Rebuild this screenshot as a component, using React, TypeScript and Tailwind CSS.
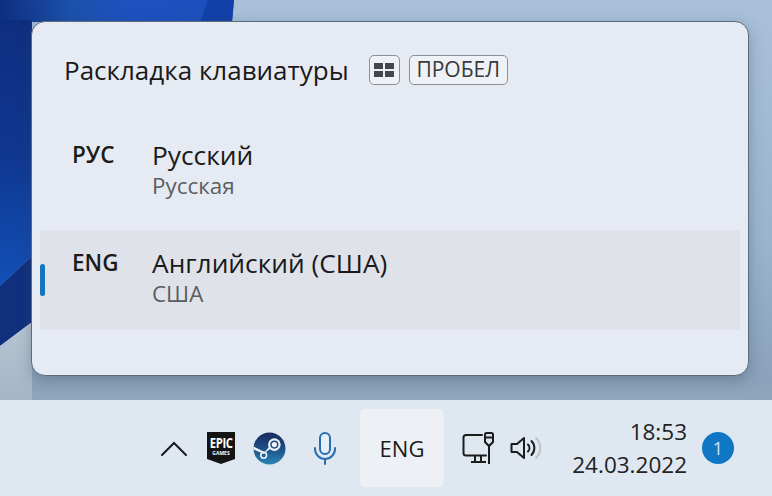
import React from "react";

function Wallpaper() {
  return (
    <svg className="absolute inset-0 h-full w-full" viewBox="0 0 772 400" preserveAspectRatio="none">
      <defs>
        <linearGradient id="sky" x1="0" y1="0" x2="0" y2="1">
          <stop offset="0" stopColor="#a9c0d9" />
          <stop offset="0.6" stopColor="#9ab4ce" />
          <stop offset="0.95" stopColor="#8aa2ba" />
          <stop offset="1" stopColor="#90a6bb" />
        </linearGradient>
        <linearGradient id="top" x1="0" y1="0" x2="1" y2="0">
          <stop offset="0" stopColor="#0e2e80" />
          <stop offset="0.1" stopColor="#123a8e" />
          <stop offset="0.3" stopColor="#1c50aa" />
          <stop offset="0.55" stopColor="#1f51c0" />
          <stop offset="1" stopColor="#1d4fbc" />
        </linearGradient>
        <linearGradient id="side" x1="0" y1="0" x2="0" y2="1">
          <stop offset="0" stopColor="#0e2e80" />
          <stop offset="0.5" stopColor="#0f3790" />
          <stop offset="1" stopColor="#1350b8" />
        </linearGradient>
        <linearGradient id="low" x1="0" y1="0" x2="0" y2="1">
          <stop offset="0" stopColor="#b7c5d3" />
          <stop offset="1" stopColor="#a3b5c6" />
        </linearGradient>
      </defs>
      <rect width="772" height="400" fill="url(#sky)" />
      <path d="M0 0H234L232 22H0Z" fill="url(#top)" />
      <path d="M208 0H234L232 22H200Z" fill="#1240a8" />
      <path d="M0 20H32V256L0 286Z" fill="url(#side)" />
      <path d="M0 286L32 256V322L0 346Z" fill="#10307e" />
      <path d="M0 346L32 322V400H0Z" fill="url(#low)" />
    </svg>
  );
}

function Row({ code, name, sub, active }: { code: string; name: string; sub: string; active?: boolean }) {
  return (
    <div className={`relative flex h-[100px] items-start pl-[32px] pt-[16px] ${active ? "bg-[#dfe3e9]" : ""}`}>
      {active && <div className="absolute left-0 top-[34px] h-[32px] w-[5px] rounded-full bg-[#1674b8]" />}
      <div className="w-[80px] pt-[2px] text-[22.5px] leading-[30px] font-semibold text-[#1b1b1b]">{code}</div>
      <div>
        <div className="text-[26.3px] leading-[34px] text-[#1a1a1a]">{name}</div>
        <div className="text-[22.4px] leading-[28px] text-[#5b5d60]">{sub}</div>
      </div>
    </div>
  );
}

function Epic() {
  return (
    <div className="flex h-[32px] w-[28px] flex-col items-center bg-[#141414] pt-[3px] [clip-path:polygon(0_0,100%_0,100%_84%,50%_100%,0_84%)]">
      <span className="scale-x-75 text-[15px] leading-[15px] font-bold tracking-[-0.5px] text-white">EPIC</span>
      <span className="text-[5px] leading-[7px] font-bold text-white">GAMES</span>
    </div>
  );
}

function Steam() {
  return (
    <svg width="33" height="33" viewBox="0 0 34 34">
      <defs>
        <linearGradient id="st" x1="0" y1="0" x2="0" y2="1">
          <stop offset="0" stopColor="#182a5c" />
          <stop offset="0.5" stopColor="#1d4f86" />
          <stop offset="1" stopColor="#2a86b5" />
        </linearGradient>
      </defs>
      <circle cx="17" cy="17" r="16.500" fill="url(#st)" />
      <path d="M0.500 18L11 22.500l8-6 3-1-3-3-2.500 3-4.500 5L0.500 15Z" fill="#eef3f8" />
      <circle cx="22" cy="13" r="6.500" fill="#eef3f8" />
      <circle cx="22" cy="13" r="4.200" fill="#1f4a80" />
      <circle cx="22" cy="13" r="2.700" fill="#eef3f8" />
      <circle cx="11" cy="24" r="3" fill="none" stroke="#eef3f8" strokeWidth="1.600" />
    </svg>
  );
}

function Mic() {
  return (
    <svg width="24" height="34" viewBox="0 0 24 34" fill="none" stroke="#2c6cb0" strokeWidth="2" strokeLinecap="round">
      <rect x="7" y="2" width="10" height="21" rx="5" fill="#e4f1fb" />
      <path d="M2 17v1a10 10 0 0 0 20 0v-1" />
      <path d="M12 28v5" />
    </svg>
  );
}

function Network() {
  return (
    <svg width="34" height="34" viewBox="0 0 34 34" fill="none" stroke="#1c1c1c" strokeWidth="2">
      <path d="M20 4H4A2.500 2.500 0 0 0 1.500 6.500V22A2.500 2.500 0 0 0 4 24.500H24" strokeLinecap="round" />
      <path d="M9 31H24M13 25v6M19 25v6" />
      <path d="M27 15V33" />
      <path d="M23 3.500A1.500 1.500 0 0 1 24.500 2H29.500A1.500 1.500 0 0 1 31 3.500V11L27 15L23 11Z" fill="#dfe6ee" />
      <path d="M23 6.500H31" />
    </svg>
  );
}

function Speaker() {
  return (
    <svg width="32" height="26" viewBox="0 0 32 26" fill="none" stroke="#1c1c1c" strokeWidth="2" strokeLinejoin="round" strokeLinecap="round">
      <path d="M1.500 9V17H7L14 23V3L7 9Z" />
      <path d="M18 9.500a5 5 0 0 1 0 7" />
      <path d="M21.500 6a10 10 0 0 1 0 14" />
      <path d="M26 3a14 14 0 0 1 0 20" stroke="#bcc3ca" />
    </svg>
  );
}

export default function App() {
  return (
    <div className="relative flex h-[496px] w-[772px] flex-col overflow-hidden font-['Open_Sans','Noto_Sans',sans-serif]">
      <div className="relative h-[400px] shrink-0 pl-[31px] pr-[23px] pt-[21px]">
        <Wallpaper />
        <div className="relative h-[355px] rounded-[14px] border border-[#5d6b7a] bg-[#e6ebf3] shadow-[0_4px_14px_rgba(50,70,90,0.35)]">
          <div className="flex items-center gap-[20px] pl-[32px] pt-[30px]">
            <div className="text-[26px] leading-[36px] text-[#1a1a1a]">Раскладка клавиатуры</div>
            <div className="flex items-center gap-[9px]">
              <div className="flex h-[30px] w-[31px] items-center justify-center rounded-[5px] border border-[#8c9097] bg-[#eef1f6]">
                <div className="grid grid-cols-2 gap-[2px]">
                  <div className="h-[6px] w-[9px] bg-[#44474b]" />
                  <div className="h-[6px] w-[9px] bg-[#44474b]" />
                  <div className="h-[6px] w-[9px] bg-[#44474b]" />
                  <div className="h-[6px] w-[9px] bg-[#44474b]" />
                </div>
              </div>
              <div className="flex h-[30px] w-[99px] items-center justify-center rounded-[5px] border border-[#8c9097] bg-[#eef1f6] text-[21px] text-[#3a3a3a]">ПРОБЕЛ</div>
            </div>
          </div>
          <div className="mx-[8px] mt-[34px]">
            <Row code="РУС" name="Русский" sub="Русская" />
            <div className="h-[8px]" />
            <Row code="ENG" name="Английский (США)" sub="США" active />
          </div>
        </div>
      </div>
      <div className="flex h-[96px] items-center bg-[#dfe8f1] pl-[160px] pr-[22px]">
        <svg width="28" height="18" viewBox="0 0 28 18" fill="none" stroke="#1a1a1a" strokeWidth="2" strokeLinecap="round"><path d="M2 16L14 4L26 16" /></svg>
        <div className="ml-[19px]"><Epic /></div>
        <div className="ml-[18px]"><Steam /></div>
        <div className="ml-[27px]"><Mic /></div>
        <div className="ml-[23px] flex h-[78px] w-[84px] items-center justify-center rounded-[6px] bg-[#edf1f6] text-[22px] text-[#1b1b1b]">ENG</div>
        <div className="ml-[18px]"><Network /></div>
        <div className="ml-[14px]"><Speaker /></div>
        <div className="ml-[26px] flex w-[119px] flex-col items-end text-[22.500px] leading-[33px] text-[#222]">
          <span>18:53</span>
          <span>24.03.2022</span>
        </div>
        <div className="ml-[15px] flex h-[32px] w-[32px] items-center justify-center rounded-full bg-[#0f77c4] text-[18px] text-[#cfe6f7]">1</div>
      </div>
    </div>
  );
}
